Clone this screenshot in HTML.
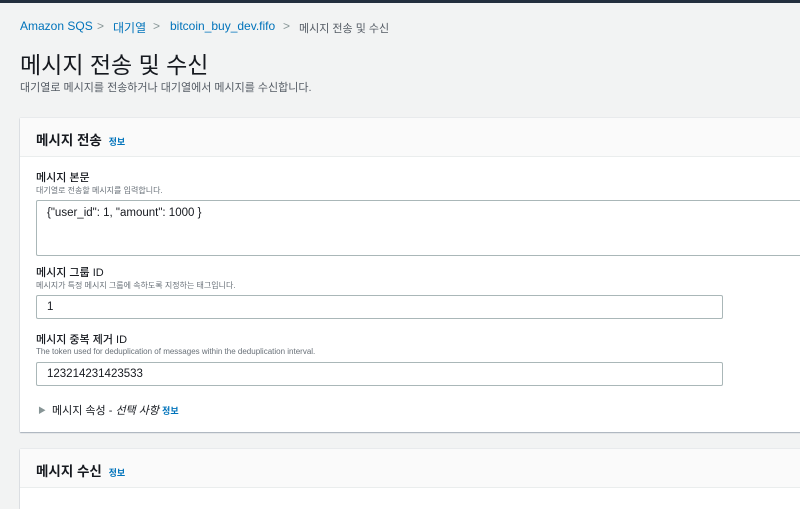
<!DOCTYPE html>
<html><head><meta charset="utf-8"><style>
*{box-sizing:border-box;margin:0;padding:0}
body{width:800px;height:497px;overflow:hidden;background:#f2f3f3;font-family:"Liberation Sans","Noto Sans CJK KR",sans-serif;color:#16191f;position:relative}
.top{position:absolute;left:0;top:0;width:800px;height:3px;background:#232f3e}
.abs{position:absolute;white-space:nowrap}
.bc{top:19px;font-size:12px}
.link{color:#0073bb}
.sep{color:#879596}
h1{position:absolute;left:20px;top:46px;font-size:23px;font-weight:400;color:#16191f}
.sub{left:20px;top:79px;font-size:11px;color:#545b64}
.panel{position:absolute;left:20px;width:800px;background:#fff;box-shadow:0 1px 1px rgba(0,31,63,.3),0 0 1px rgba(0,31,63,.2)}
.ph{height:39px;background:#fafafa;border-bottom:1px solid #eaeded;padding:11px 16px;font-size:13.5px;font-weight:700}
.ph .i{font-size:9px;color:#0073bb;font-weight:700;margin-left:3px}
.lbl{left:36px;font-size:11px;color:#16191f;font-weight:500}
.desc{left:36px;font-size:8px;color:#687078}
.box{position:absolute;left:36px;border:1px solid #aab7b8;background:#fff;font-size:11.5px;padding:0 10px;border-radius:2px}
</style></head><body>
<div class="top"></div>
<div class="abs bc link" style="left:20px">Amazon SQS</div>
<div class="abs bc sep" style="left:97px">&gt;</div>
<div class="abs bc link" style="left:113px">대기열</div>
<div class="abs bc sep" style="left:153px">&gt;</div>
<div class="abs bc link" style="left:170px">bitcoin_buy_dev.fifo</div>
<div class="abs bc sep" style="left:283px">&gt;</div>
<div class="abs bc" style="left:299px;color:#545b64;font-size:11px;top:20px">메시지 전송 및 수신</div>
<h1>메시지 전송 및 수신</h1>
<div class="abs sub">대기열로 메시지를 전송하거나 대기열에서 메시지를 수신합니다.</div>

<div class="panel" style="top:118px;height:314px">
<div class="ph">메시지 전송 <span class="i">정보</span></div>
</div>
<div class="abs lbl" style="top:169px">메시지 본문</div>
<div class="abs desc" style="top:185px">대기열로 전송할 메시지를 입력합니다.</div>
<div class="box" style="top:200px;width:780px;height:56px;padding-top:6px">{"user_id": 1, "amount": 1000 }</div>
<div class="abs lbl" style="top:264px">메시지 그룹 ID</div>
<div class="abs desc" style="top:280px">메시지가 특정 메시지 그룹에 속하도록 지정하는 태그입니다.</div>
<div class="box" style="top:295px;width:687px;height:24px;line-height:22px">1</div>
<div class="abs lbl" style="top:331px">메시지 중복 제거 ID</div>
<div class="abs desc" style="top:347px">The token used for deduplication of messages within the deduplication interval.</div>
<div class="box" style="top:362px;width:687px;height:24px;line-height:22px">123214231423533</div>
<div class="abs" style="left:38px;top:405px;font-size:8px;color:#879596">▶</div>
<div class="abs" style="left:52px;top:402px;font-size:11px;color:#16191f">메시지 속성 - <i>선택 사항</i> <span style="color:#0073bb;font-size:9px;font-weight:700">정보</span></div>

<div class="panel" style="top:449px;height:60px">
<div class="ph">메시지 수신 <span class="i">정보</span></div>
</div>
</body></html>
